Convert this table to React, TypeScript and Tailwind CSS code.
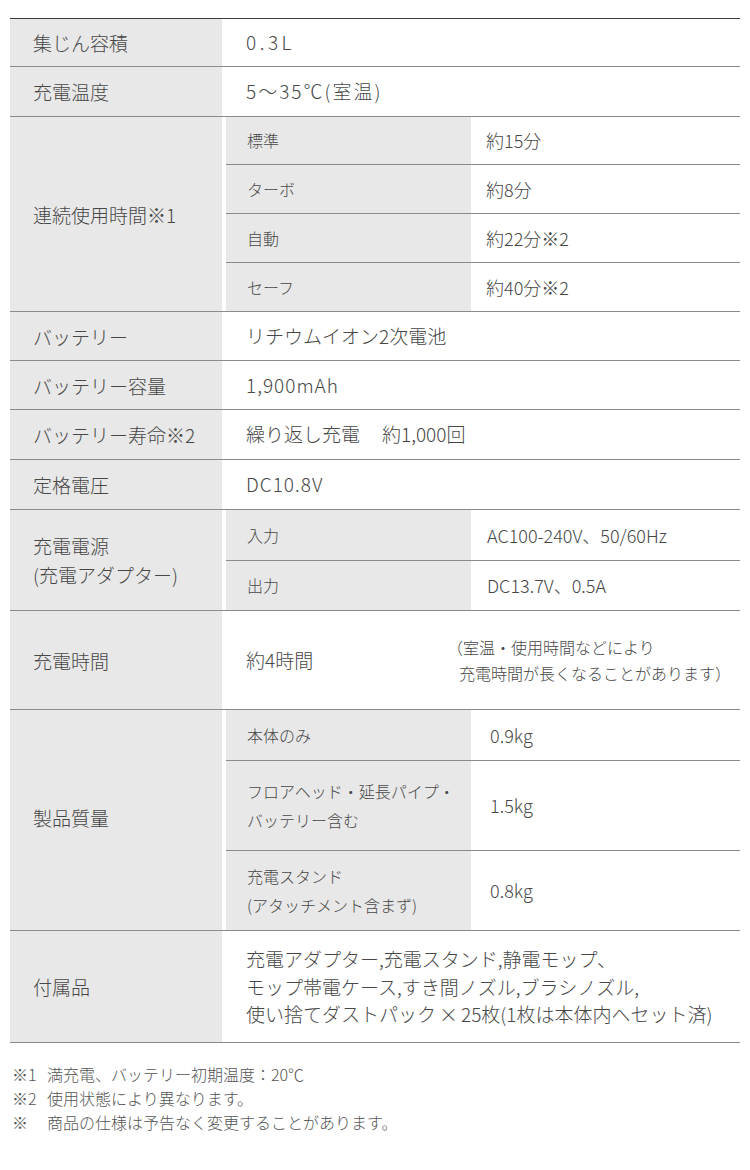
type Sub = { label: React.ReactNode; value: React.ReactNode; h: string };

const font = { fontFamily: '"Noto Sans CJK JP", "Noto Sans", sans-serif' };

const Label = ({ children }: { children: React.ReactNode }) => (
  <div className="flex items-center bg-[#e8e8e8] pl-[23px] text-[19px] leading-[29px]">
    <div>{children}</div>
  </div>
);

const Row = ({ h, label, children }: { h: string; label: React.ReactNode; children: React.ReactNode }) => (
  <div className={`grid grid-cols-[212px_1fr] border-b border-[#8a8a8a] ${h}`}>
    <Label>{label}</Label>
    <div className="flex items-center pl-[24px] text-[19px]">{children}</div>
  </div>
);

const Nested = ({ h, label, subs, valuePad }: { h: string; label: React.ReactNode; subs: Sub[]; valuePad: string }) => (
  <div className={`grid grid-cols-[212px_1fr] border-b border-[#8a8a8a] ${h}`}>
    <Label>{label}</Label>
    <div className="flex flex-col pl-[4px]">
      {subs.map((s, i) => (
        <div
          key={i}
          className={`grid grid-cols-[245px_1fr] ${s.h} ${i < subs.length - 1 ? "border-b border-[#8a8a8a]" : "flex-1"}`}
        >
          <div className="flex items-center bg-[#e8e8e8] pl-[21px] text-[16px] leading-[29px]">
            <div>{s.label}</div>
          </div>
          <div className={`flex items-center text-[18px] ${valuePad}`}>{s.value}</div>
        </div>
      ))}
    </div>
  </div>
);

export default function App() {
  return (
    <div className="min-h-[1170px] bg-white pt-[18px] font-light text-[#474747]" style={font}>
      <div className="mx-[10px] border-t border-[#3a3a3a]">
        <Row h="h-[48px]" label="集じん容積">
          <span className="tracking-[3.5px]">0.3L</span>
        </Row>
        <Row h="h-[50px]" label="充電温度">
          <span className="tracking-[2px]">5〜35℃(室温)</span>
        </Row>
        <Nested
          h="h-[195px]"
          label="連続使用時間※1"
          valuePad="pl-[15px]"
          subs={[
            { label: "標準", value: "約15分", h: "h-[48px]" },
            { label: "ターボ", value: "約8分", h: "h-[49px]" },
            { label: "自動", value: "約22分※2", h: "h-[49px]" },
            { label: "セーフ", value: "約40分※2", h: "" },
          ]}
        />
        <Row h="h-[49px]" label="バッテリー">
          リチウムイオン2次電池
        </Row>
        <Row h="h-[49px]" label="バッテリー容量">
          <span className="tracking-[1px]">1,900mAh</span>
        </Row>
        <Row h="h-[50px]" label="バッテリー寿命※2">
          繰り返し充電<span className="ml-[22px]">約1,000回</span>
        </Row>
        <Row h="h-[50px]" label="定格電圧">
          <span className="tracking-[1px]">DC10.8V</span>
        </Row>
        <Nested
          h="h-[101px]"
          label={
            <>
              充電電源
              <br />
              (充電アダプター)
            </>
          }
          valuePad="pl-[16px]"
          subs={[
            { label: "入力", value: "AC100-240V、50/60Hz", h: "h-[51px]" },
            { label: "出力", value: "DC13.7V、0.5A", h: "" },
          ]}
        />
        <Row h="h-[99px]" label="充電時間">
          <span className="w-[201px] shrink-0">約4時間</span>
          <div className="text-[16px] leading-[26px]">
            <div>（室温・使用時間などにより</div>
            <div className="pl-[12px]">充電時間が長くなることがあります）</div>
          </div>
        </Row>
        <Nested
          h="h-[221px]"
          label={<div className="-mt-[6px]">製品質量</div>}
          valuePad="pl-[19px]"
          subs={[
            { label: "本体のみ", value: "0.9kg", h: "h-[51px]" },
            {
              label: (
                <>
                  フロアヘッド・延長パイプ・
                  <br />
                  バッテリー含む
                </>
              ),
              value: "1.5kg",
              h: "h-[90px]",
            },
            {
              label: (
                <>
                  充電スタンド
                  <br />
                  (アタッチメント含まず)
                </>
              ),
              value: "0.8kg",
              h: "",
            },
          ]}
        />
        <Row h="h-[112px]" label="付属品">
          <div className="leading-[27.5px]">
            充電アダプター,充電スタンド,静電モップ、
            <br />
            モップ帯電ケース,すき間ノズル,ブラシノズル,
            <br />
            使い捨てダストパック<span className="px-[3px]">×</span>25枚(1枚は本体内へセット済)
          </div>
        </Row>
      </div>

      <div className="mt-[19px] px-[12px] text-[16px] leading-[24px] text-[#555]">
        <div className="flex">
          <span className="w-[35px] shrink-0">※1</span>
          <span>満充電、バッテリー初期温度：20℃</span>
        </div>
        <div className="flex">
          <span className="w-[35px] shrink-0">※2</span>
          <span>使用状態により異なります。</span>
        </div>
        <div className="flex">
          <span className="w-[35px] shrink-0">※</span>
          <span>商品の仕様は予告なく変更することがあります。</span>
        </div>
      </div>
    </div>
  );
}
